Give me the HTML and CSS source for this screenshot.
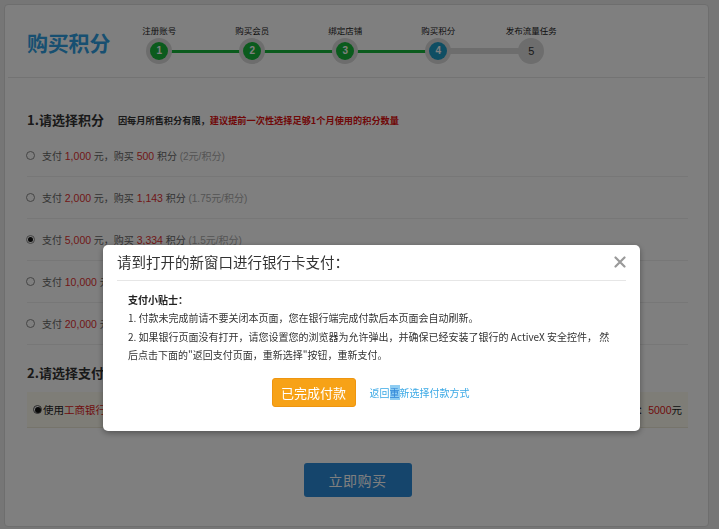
FILE: index.html
```html
<!DOCTYPE html>
<html lang="zh-CN">
<head>
<meta charset="utf-8">
<title>购买积分</title>
<link rel="stylesheet" href="styles.css">
</head>
<body>
<div class="page">
  <header class="header">
    <h1 class="page-title">购买积分</h1>
    <ol class="steps">
      <li class="step done"><span class="step-label">注册账号</span><span class="step-dot">1</span></li>
      <li class="step done"><span class="step-label">购买会员</span><span class="step-dot">2</span></li>
      <li class="step done"><span class="step-label">绑定店铺</span><span class="step-dot">3</span></li>
      <li class="step current"><span class="step-label">购买积分</span><span class="step-dot">4</span></li>
      <li class="step todo"><span class="step-label">发布流量任务</span><span class="step-dot">5</span></li>
    </ol>
  </header>

  <main class="content">
    <div class="sec-title">
      <h2 class="sec-name">1.请选择积分</h2>
      <span class="sec-note">因每月所售积分有限，<em>建议提前一次性选择足够1个月使用的积分数量</em></span>
    </div>
    <ul class="options">
      <li class="option"><span class="radio"></span><span class="opt-text">支付 <b>1,000</b> 元，购买 <b>500</b> 积分 <i>(2元/积分)</i></span></li>
      <li class="option"><span class="radio"></span><span class="opt-text">支付 <b>2,000</b> 元，购买 <b>1,143</b> 积分 <i>(1.75元/积分)</i></span></li>
      <li class="option"><span class="radio checked"></span><span class="opt-text">支付 <b>5,000</b> 元，购买 <b>3,334</b> 积分 <i>(1.5元/积分)</i></span></li>
      <li class="option"><span class="radio"></span><span class="opt-text">支付 <b>10,000</b> 元</span></li>
      <li class="option"><span class="radio"></span><span class="opt-text">支付 <b>20,000</b> 元</span></li>
    </ul>

    <div class="sec-title sec-title-2">
      <h2 class="sec-name">2.请选择支付</h2>
    </div>
    <div class="pay-row">
      <span class="pay-left"><span class="radio big checked"></span>使用<em>工商银行</em></span>
      <span class="pay-right">：<em>5000</em>元</span>
    </div>

    <div class="buy-wrap"><button class="buy-btn">立即购买</button></div>
  </main>
</div>

<div class="backdrop"></div>

<div class="modal">
  <div class="modal-head">
    <span class="modal-title">请到打开的新窗口进行银行卡支付：</span>
    <svg class="modal-close" width="12" height="12" viewBox="0 0 12 12"><path d="M1.5 1.5 L10.5 10.5 M10.5 1.5 L1.5 10.5" stroke="#9a9a9a" stroke-width="2.2" stroke-linecap="round"/></svg>
  </div>
  <div class="modal-body">
    <p class="tip-title">支付小贴士：</p>
    <p class="tip">1. 付款未完成前请不要关闭本页面，您在银行端完成付款后本页面会自动刷新。</p>
    <p class="tip">2. 如果银行页面没有打开，请您设置您的浏览器为允许弹出，并确保已经安装了银行的 ActiveX 安全控件， 然后点击下面的"返回支付页面，重新选择"按钮，重新支付。</p>
    <div class="modal-actions">
      <button class="done-btn">已完成付款</button>
      <a class="back-link" href="#">返回<span class="sel">重</span>新选择付款方式</a>
    </div>
  </div>
</div>
</body>
</html>
```

FILE: styles.css
```css
* { box-sizing: border-box; }
html, body { margin: 0; padding: 0; }
body {
  width: 719px;
  height: 529px;
  overflow: hidden;
  background: #ececec;
  font-family: "Liberation Sans", "Noto Sans CJK SC", sans-serif;
  color: #333;
}
ol, ul { list-style: none; margin: 0; padding: 0; }
p, h1, h2 { margin: 0; }
em, i, b { font-style: normal; }

.page {
  margin: 4px 0 0 4px;
  width: 705px;
  height: 523px;
  background: #fff;
  border: 1px solid #dcdcdc;
  border-radius: 4px;
}

/* header */
.header {
  margin: 0 3px;
  height: 73px;
  display: flex;
  align-items: flex-start;
  padding-left: 19px;
  border-bottom: 1px solid #e6e6e6;
}
.page-title {
  margin-top: 23px;
  font-size: 21px;
  line-height: 28px;
  font-weight: bold;
  color: #2f9fe2;
  font-family: "Noto Sans CJK SC", sans-serif;
  letter-spacing: -0.2px;
}
.steps {
  display: flex;
  margin: 19px 0 0 2.5px;
}
.step {
  width: 93px;
  display: flex;
  flex-direction: column;
  align-items: center;
  position: relative;
}
.step-label {
  font-size: 8.5px;
  line-height: 12px;
  color: #222;
  font-family: "Noto Sans CJK SC", sans-serif;
}
.step-dot {
  position: relative;
  z-index: 1;
  margin-top: 6px;
  width: 18px;
  height: 18px;
  border-radius: 50%;
  background: #17b63b;
  box-shadow: 0 0 0 4px #dadada;
  color: #fff;
  font-size: 10px;
  font-weight: bold;
  line-height: 18px;
  text-align: center;
}
.step::after {
  content: "";
  position: absolute;
  left: 50%;
  width: 100%;
  top: 25.5px;
  height: 3px;
  background: #17b63b;
}
.step.current .step-dot { background: #1f9cc6; }
.step.current::after { top: 24px; height: 6px; background: #dadada; }
.step.todo .step-dot { background: #dadada; color: #333; font-weight: normal; font-size: 11px; }
.step.todo::after { display: none; }

/* content */
.content { padding: 0 20px 0 22px; }
.sec-title {
  margin-top: 32px;
  display: flex;
  align-items: center;
  height: 20px;
}
.sec-name {
  font-size: 13px;
  line-height: 20px;
  font-weight: bold;
  color: #333;
  font-family: "Noto Sans CJK SC", sans-serif;
}
.sec-note {
  margin-left: 14px;
  font-size: 9.2px;
  font-weight: bold;
  color: #333;
  font-family: "Noto Sans CJK SC", sans-serif;
}
.sec-note em { color: #e01010; }

.options { margin-top: 5px; }
.option {
  height: 42px;
  display: flex;
  align-items: center;
  border-bottom: 1px solid #eeeeee;
  padding-bottom: 1px;
}
.radio {
  width: 9px;
  height: 9px;
  border: 1px solid #8a8a8a;
  border-radius: 50%;
  margin-left: -1px;
  margin-right: 7px;
  background: #fff;
  flex: none;
  display: inline-flex;
  align-items: center;
  justify-content: center;
}
.radio.checked::after {
  content: "";
  width: 5px;
  height: 5px;
  border-radius: 50%;
  background: #111;
}
.opt-text {
  font-size: 10px;
  color: #666;
  white-space: nowrap;
}
.opt-text b { color: #e23030; font-weight: normal; font-size: 10.5px; }
.opt-text i { color: #aaa; }

.sec-title-2 { margin-top: 18px; }

.pay-row {
  margin-top: 9px;
  height: 36px;
  background: #fdfbef;
  border-bottom: 1px solid #ece8d6;
  display: flex;
  align-items: center;
  justify-content: space-between;
  padding: 0 6px 0 6px;
  font-size: 10.5px;
  color: #222;
  font-family: "Noto Sans CJK SC", sans-serif;
}
.pay-left { display: flex; align-items: center; }
.pay-left em { color: #e01818; }
.radio.big { width: 9px; height: 9px; margin: 0 1px 0 0; border-color: #555; }
.radio.big.checked::after { width: 6px; height: 6px; }
.pay-right em { color: #e01818; font-family: "Liberation Sans", sans-serif; font-size: 10.5px; }

.buy-wrap { display: flex; justify-content: center; margin-top: 35px; }
.buy-btn {
  width: 108px;
  height: 34px;
  border: 0;
  border-radius: 3px;
  background: #2b8ad8;
  color: #fff;
  font-size: 14px;
  font-family: "Noto Sans CJK SC", sans-serif;
  letter-spacing: 0.5px;
}

/* overlay + modal */
.backdrop {
  position: fixed;
  inset: 0;
  z-index: 10;
  background: rgba(0, 0, 0, 0.5);
}
.modal {
  position: fixed;
  z-index: 11;
  left: 103px;
  top: 245px;
  width: 537px;
  height: 186px;
  background: #fff;
  border-radius: 5px;
  box-shadow: 0 2px 6px rgba(0, 0, 0, 0.35);
  font-family: "Noto Sans CJK SC", sans-serif;
}
.modal-head {
  margin: 0 14px;
  height: 36px;
  display: flex;
  align-items: center;
  justify-content: space-between;
  border-bottom: 1px solid #e6e6e6;
}
.modal-title {
  font-size: 14.5px;
  color: #333;
  line-height: 20px;
  margin-top: -1px;
}
.modal-close { margin-right: 0; margin-top: -2px; }
.modal-body {
  padding: 10px 26px 0 25px;
}
.tip-title {
  font-size: 10px;
  line-height: 18px;
  font-weight: bold;
  color: #222;
}
.tip {
  font-size: 10px;
  line-height: 18.5px;
  color: #333;
}
.modal-actions {
  margin-top: 13px;
  display: flex;
  align-items: center;
  justify-content: center;
  gap: 14px;
  padding-right: 1px;
}
.done-btn {
  width: 84px;
  height: 29px;
  border: 1px solid #ee9510;
  border-radius: 3px;
  background: #f7a217;
  color: #fff;
  font-size: 13px;
  font-family: "Noto Sans CJK SC", sans-serif;
  padding: 0;
}
.back-link {
  font-size: 10px;
  color: #3ba9e6;
  text-decoration: none;
}
.back-link .sel { background: #8fcdf2; color: #2f86d8; }
```
